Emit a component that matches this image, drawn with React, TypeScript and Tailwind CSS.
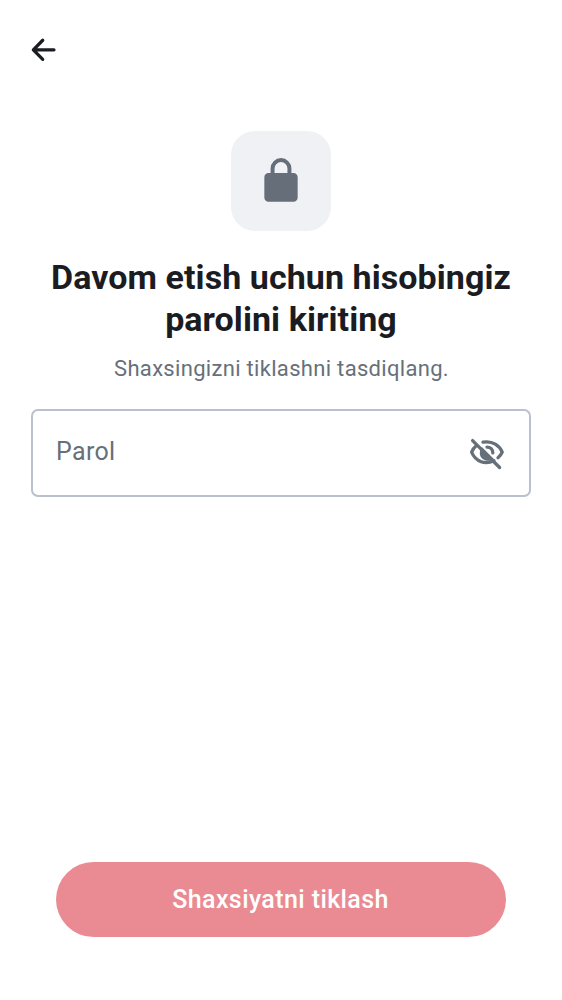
import React from 'react';

export default function App() {
  return (
    <main className="flex h-[1000px] w-[562px] flex-col bg-white font-['Roboto',sans-serif]">
      <header className="flex h-[99px] items-center pl-[25px]">
        <button type="button" aria-label="Orqaga" className="size-[37px]">
          <svg viewBox="0 0 24 24" className="size-[37px]" fill="none" stroke="#1b1c22" strokeWidth="2.1" strokeLinecap="round" strokeLinejoin="round">
            <path d="M18.8 12.2H5.7M11.5 6 5.4 12.2l6.1 6.2" />
          </svg>
        </button>
      </header>
      <section className="flex flex-col items-center pt-[32px]">
        <div className="flex size-[100px] items-center justify-center rounded-[24px] bg-[#f0f1f5]">
          <svg viewBox="0 0 24 24" className="size-[50px]" fill="#666f79">
            <path d="M18 8.2h-1V6A5 5 0 0 0 7 6v2.2H6a2 2 0 0 0-2 2V20a2 2 0 0 0 2 2h12a2 2 0 0 0 2-2v-9.8a2 2 0 0 0-2-2ZM8.9 8.2V6a3.1 3.1 0 0 1 6.2 0v2.2Z" />
          </svg>
        </div>
        <h1 className="mt-[25px] text-center text-[34px] leading-[42px] font-bold tracking-[0.07px] text-[#1b1c22]">
          Davom etish uchun hisobingiz<br />parolini kiriting
        </h1>
        <p className="mt-[13px] pl-px text-[22px] leading-[31px] tracking-[0.31px] text-[#66707a]">Shaxsingizni tiklashni tasdiqlang.</p>
      </section>
      <div className="mx-[31px] mt-[25px] flex h-[88px] items-center justify-between rounded-[7px] border-2 border-[#bac0cd] pr-[23px] pb-[2px] pl-[23px]">
        <span className="text-[25px] tracking-[0.35px] text-[#66707a]">Parol</span>
        <svg viewBox="0 0 37 37" className="size-[37px]" fill="none" stroke="#66707a" strokeWidth="3.3" strokeLinecap="round">
          <path d="M14 8.2c9.7-2 16.8 4 19.2 10-.8 2-2.3 4-4.2 5.5M7.5 11.5C5.2 13.3 3.5 15.5 2.6 18.2c4.2 9.8 13.7 12.8 22.4 8.5M18 13.1c3.5 0 5.8 2.3 5.8 5.8" />
          <path d="m12.8 13 12 12c-6 4.2-14 .7-14-6 0-2.5.7-4.6 2-6Z" fill="#66707a" stroke="none" />
          <path d="M3.6 6.6 30.6 33.5" />
        </svg>
      </div>
      <button type="button" className="mx-[56px] mt-auto mb-[63px] h-[75px] rounded-full bg-[#ea8b93] pt-px pr-px text-[25px] font-medium tracking-[0.4px] text-white">Shaxsiyatni tiklash</button>
    </main>
  );
}
